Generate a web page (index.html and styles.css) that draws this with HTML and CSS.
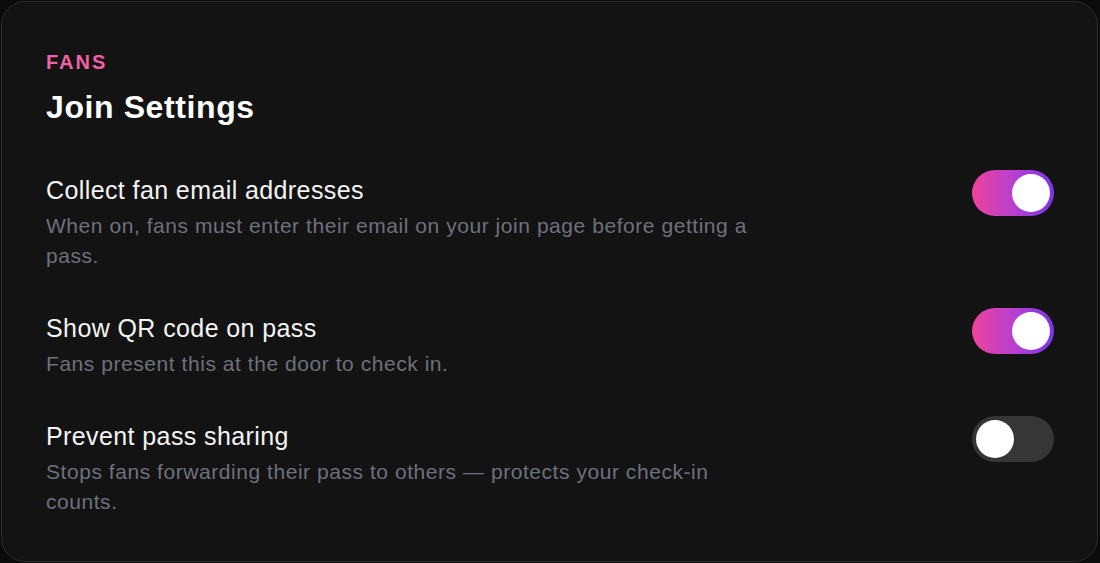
FILE: index.html
```html
<!DOCTYPE html>
<html lang="en">
<head>
<meta charset="utf-8">
<title>Join Settings</title>
<link rel="stylesheet" href="styles.css">
</head>
<body>
<section class="card">
  <header class="card-head">
    <div class="eyebrow">FANS</div>
    <h1 class="heading">Join Settings</h1>
  </header>
  <div class="settings">
    <div class="setting">
      <div class="setting-text">
        <div class="setting-title">Collect fan email addresses</div>
        <p class="setting-desc">When on, fans must enter their email on your join page before getting a pass.</p>
      </div>
      <button class="toggle is-on" type="button" aria-pressed="true"><span class="knob"></span></button>
    </div>
    <div class="setting">
      <div class="setting-text">
        <div class="setting-title">Show QR code on pass</div>
        <p class="setting-desc">Fans present this at the door to check in.</p>
      </div>
      <button class="toggle is-on" type="button" aria-pressed="true"><span class="knob"></span></button>
    </div>
    <div class="setting">
      <div class="setting-text">
        <div class="setting-title">Prevent pass sharing</div>
        <p class="setting-desc">Stops fans forwarding their pass to others — protects your check-in counts.</p>
      </div>
      <button class="toggle" type="button" aria-pressed="false"><span class="knob"></span></button>
    </div>
  </div>
</section>
</body>
</html>
```

FILE: styles.css
```css
* { box-sizing: border-box; }

html, body {
  margin: 0;
  background: #0b0b0b;
}

body {
  padding: 1px 0 0 1px;
  font-family: "Liberation Sans", Arial, sans-serif;
}

.card {
  width: 1097px;
  height: 561px;
  background: #131313;
  border: 1px solid #2c2c2c;
  border-radius: 24px;
  padding: 48px 43px 0 44px;
}

.eyebrow {
  font-size: 20px;
  line-height: 24px;
  font-weight: 700;
  letter-spacing: 2px;
  color: #f061a8;
}

.heading {
  margin: 13px 0 0;
  font-size: 32px;
  line-height: 40px;
  font-weight: 700;
  letter-spacing: 0.6px;
  color: #ffffff;
}

.settings {
  margin-top: 43px;
  display: flex;
  flex-direction: column;
  gap: 37px;
}

.setting {
  display: flex;
  align-items: flex-start;
  justify-content: space-between;
  gap: 24px;
}

.setting-text {
  flex: 1;
  min-width: 0;
}

.setting-title {
  font-size: 25px;
  line-height: 40px;
  letter-spacing: 0.4px;
  color: #f4f4f4;
}

.setting-desc {
  margin: 1px 0 0;
  max-width: 720px;
  font-size: 21px;
  line-height: 30px;
  letter-spacing: 0.55px;
  color: #6d717d;
}

.toggle {
  flex: none;
  position: relative;
  width: 82px;
  height: 46px;
  padding: 0;
  border: 0;
  border-radius: 23px;
  background: #363636;
  cursor: pointer;
}

.toggle.is-on {
  background: linear-gradient(90deg, #ee439b 0%, #b33fd3 55%, #7b34e6 100%);
}

.knob {
  position: absolute;
  top: 4px;
  left: 4px;
  width: 38px;
  height: 38px;
  border-radius: 50%;
  background: #ffffff;
}

.toggle.is-on .knob {
  left: 40px;
}
```
